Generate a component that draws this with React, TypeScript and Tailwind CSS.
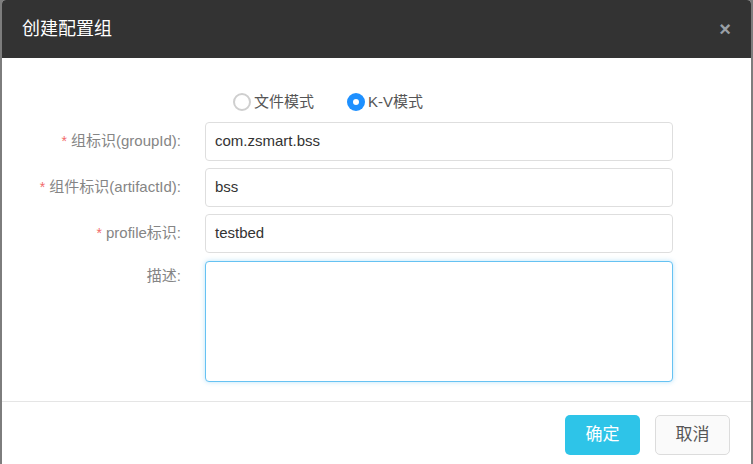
import React, { useState } from "react";

const font = "font-['Microsoft_YaHei','Liberation_Sans','Noto_Sans_CJK_SC',sans-serif]";

function Radio({ checked, label, onClick }: { checked: boolean; label: string; onClick: () => void }) {
  return (
    <button type="button" onClick={onClick} className="flex items-center gap-[3px] text-[15px] text-[#555]">
      <span
        className={
          checked
            ? "grid h-[18px] w-[18px] place-items-center rounded-full bg-[#1e90ff]"
            : "h-[18px] w-[18px] rounded-full border-2 border-[#cfcfcf] bg-white"
        }
      >
        {checked && <span className="h-[6px] w-[6px] rounded-full bg-white" />}
      </span>
      {label}
    </button>
  );
}

function Row({ label, required, value }: { label: string; required?: boolean; value: string }) {
  return (
    <div className="flex items-center">
      <label className="w-[181px] shrink-0 pr-[2px] text-right text-[15px] text-[#858585]">
        {required && <span className="mr-[4px] text-[14px] text-[#f26b6b]">*</span>}
        {label}
      </label>
      <div className="ml-[22px] flex h-[39px] w-[468px] items-center rounded-[4px] border border-[#dedede] bg-white px-[9px] text-[15px] text-[#333]">
        {value}
      </div>
    </div>
  );
}

export default function App() {
  const [mode, setMode] = useState<"file" | "kv">("kv");

  return (
    <div className={`${font} h-[464px] w-[753px] overflow-hidden bg-[#7d7d7d] px-[2px]`}>
      <div className="flex h-full flex-col overflow-hidden rounded-t-[4px] bg-white">
        <div className="flex h-[58px] shrink-0 items-center justify-between bg-[#333333] pl-[20px] pr-[20px]">
          <h2 className="text-[18px] text-white">创建配置组</h2>
          <span className="text-[20px] font-bold leading-none text-[#9aa0a6]">×</span>
        </div>

        <div className="flex flex-col pt-[33px]">
          <div className="flex gap-[33px] pl-[231px]">
            <Radio checked={mode === "file"} label="文件模式" onClick={() => setMode("file")} />
            <Radio checked={mode === "kv"} label="K-V模式" onClick={() => setMode("kv")} />
          </div>

          <div className="mt-[8px] flex flex-col gap-[7px]">
            <Row required label="组标识(groupId):" value="com.zsmart.bss" />
            <Row required label="组件标识(artifactId):" value="bss" />
            <Row required label="profile标识:" value="testbed" />
            <div className="mt-[1px] flex items-start">
              <label className="w-[181px] shrink-0 pr-[2px] pt-[4px] text-right text-[15px] text-[#858585]">描述:</label>
              <textarea className="ml-[22px] h-[121px] w-[468px] resize-none rounded-[4px] border border-[#66c2f2] bg-white shadow-[0_0_5px_rgba(102,194,242,0.45)] outline-none" />
            </div>
          </div>
        </div>

        <div className="mt-[19px] flex justify-end gap-[15px] border-t border-[#e5e5e5] pr-[21px] pt-[13px]">
          <button className="h-[40px] w-[75px] rounded-[5px] bg-[#2ec4e8] text-[17px] text-white">确定</button>
          <button className="h-[40px] w-[75px] rounded-[5px] border border-[#dcdcdc] bg-[#fafafa] text-[17px] text-[#555]">取消</button>
        </div>
      </div>
    </div>
  );
}
